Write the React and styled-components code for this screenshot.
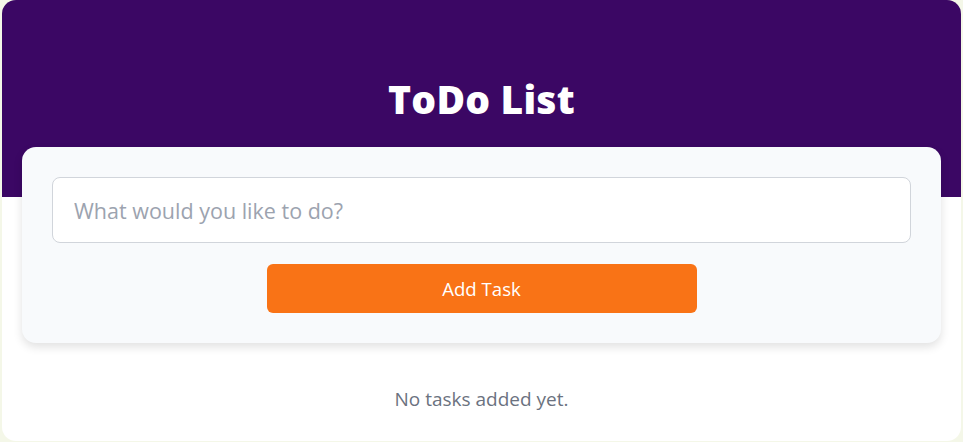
import React, { useState } from "react";
import styled, { createGlobalStyle } from "styled-components";

const GlobalStyle = createGlobalStyle`
  * { box-sizing: border-box; }
  body {
    margin: 0;
    background: #f4f7e8;
    font-family: "Open Sans", "Noto Sans", sans-serif;
  }
`;

const Page = styled.div`
  margin: 0 2px;
  min-height: 441px;
  padding: 75px 20px 20px;
  border-radius: 14px;
  background: linear-gradient(#3b0764 0, #3b0764 197px, #ffffff 197px);
  display: flex;
  flex-direction: column;
  align-items: stretch;
`;

const Title = styled.h1`
  margin: 0 0 24px;
  text-align: center;
  color: #ffffff;
  font-size: 39px;
  line-height: 48px;
  font-weight: 800;
  letter-spacing: 0.2px;
`;

const Card = styled.div`
  background: #f8fafc;
  border-radius: 14px;
  padding: 30px;
  box-shadow: 0 4px 10px rgba(0, 0, 0, 0.12);
  display: flex;
  flex-direction: column;
  align-items: center;
  gap: 21px;
`;

const Input = styled.input`
  width: 100%;
  height: 66px;
  padding: 0 21px;
  border: 1px solid #d1d5db;
  border-radius: 8px;
  background: #ffffff;
  font-family: inherit;
  font-size: 21.5px;
  color: #374151;
  outline: none;

  &::placeholder {
    color: #9ca3af;
  }
`;

const AddButton = styled.button`
  width: 430px;
  height: 49px;
  border: none;
  border-radius: 6px;
  background: #f97316;
  color: #ffffff;
  font-family: inherit;
  font-size: 18.6px;
  cursor: pointer;
`;

const Empty = styled.p`
  margin: 43px 0 0;
  text-align: center;
  color: #6b7280;
  font-size: 19px;
  line-height: 27px;
`;

const App = () => {
  const [text, setText] = useState("");
  const [tasks, setTasks] = useState([]);

  const addTask = () => {
    if (!text.trim()) return;
    setTasks([...tasks, text.trim()]);
    setText("");
  };

  return (
    <>
      <GlobalStyle />
      <Page>
        <Title>ToDo List</Title>
        <Card>
          <Input
            placeholder="What would you like to do?"
            value={text}
            onChange={(e) => setText(e.target.value)}
          />
          <AddButton onClick={addTask}>Add Task</AddButton>
        </Card>
        {tasks.length === 0 ? (
          <Empty>No tasks added yet.</Empty>
        ) : (
          tasks.map((t, i) => <Empty key={i}>{t}</Empty>)
        )}
      </Page>
    </>
  );
};

export default App;
